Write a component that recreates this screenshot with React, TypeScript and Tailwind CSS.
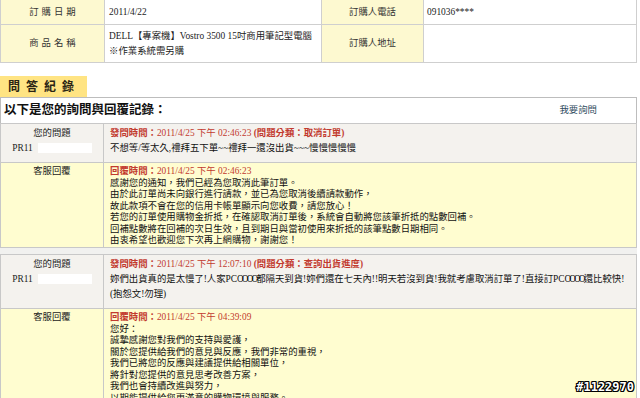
import React from "react";

const BR = "border-[#c8c8c8]";

function TopLabel({ children, wide }: { children: React.ReactNode; wide?: boolean }) {
  return (
    <div
      className={`shrink-0 bg-[#fdf9d0] border-r border-[#cfcfcf] flex items-center justify-center text-[#333] ${
        wide ? "w-[102px]" : "w-[104px] tracking-[3px] pl-[3px]"
      }`}
    >
      {children}
    </div>
  );
}

function Block({
  red,
  redMeta,
  qLines,
  rTime,
  rLines,
}: {
  red: string;
  redMeta: string;
  qLines: React.ReactNode[];
  rTime: string;
  rLines: string[];
}) {
  return (
    <div className={`w-[637px] border ${BR}`}>
      <div className={`flex bg-[#f4f2ee] border-b ${BR}`}>
        <div className={`w-[103px] shrink-0 border-r ${BR} text-center pt-[1.5px] pb-[6.5px] leading-[15px] text-[#222]`}>
          <div>您的問題</div>
          <div className="flex items-center justify-center">
            <span>PR11</span>
            <span className="inline-block w-[54px] h-[10px] bg-white ml-[5px]" />
          </div>
        </div>
        <div className="flex-1 min-w-0 pl-[6px] pt-[1.5px] pb-[6.5px] leading-[15px] whitespace-nowrap overflow-hidden text-[#111]">
          <div className="text-[#c23a2e]">
            <span className="font-semibold">發問時間：</span>
            {red}
            <span className="font-semibold">{redMeta}</span>
          </div>
          {qLines.map((l, i) => (
            <div key={i}>{l}</div>
          ))}
        </div>
      </div>
      <div className="flex bg-[#fffdd0]">
        <div className={`w-[103px] shrink-0 border-r ${BR} text-center pt-[3px] leading-[11.5px] text-[#222]`}>
          客服回覆
        </div>
        <div className="flex-1 min-w-0 pl-[6px] pt-[3px] pb-[0.5px] leading-[11.5px] whitespace-nowrap overflow-hidden text-[#111]">
          <div className="text-[#c23a2e]">
            <span className="font-semibold">回覆時間：</span>
            {rTime}
          </div>
          {rLines.map((l, i) => (
            <div key={i}>{l}</div>
          ))}
        </div>
      </div>
    </div>
  );
}

export default function App() {
  return (
    <div className="relative w-[640px] h-[398px] overflow-hidden bg-white text-[9.4px] [font-family:'Liberation_Serif','Noto_Sans_CJK_TC',serif]">
      {/* top order table */}
      <div className="w-[637px]">
        <div className="flex h-[25px] border-b border-[#cfcfcf] border-l">
          <TopLabel>訂購日期</TopLabel>
          <div className="w-[217px] shrink-0 border-r border-[#cfcfcf] flex items-center pl-[4px] text-[#222]">
            2011/4/22
          </div>
          <TopLabel wide>訂購人電話</TopLabel>
          <div className="flex-1 border-r border-[#cfcfcf] flex items-center pl-[3px] text-[#222]">091036****</div>
        </div>
        <div className="flex h-[38px] border-b border-[#cfcfcf] border-l">
          <TopLabel>商品名稱</TopLabel>
          <div className="w-[217px] shrink-0 border-r border-[#cfcfcf] flex flex-col justify-center pl-[4px] leading-[15px] text-[#222] whitespace-nowrap overflow-hidden">
            <div>DELL【專案機】Vostro 3500 15吋商用筆記型電腦</div>
            <div>※作業系統需另購</div>
          </div>
          <TopLabel wide>訂購人地址</TopLabel>
          <div className="flex-1 border-r border-[#cfcfcf]" />
        </div>
      </div>

      {/* tab */}
      <div className="mt-[13px] w-[87px] h-[21px] bg-[#ffe483] flex items-center pl-[8px] text-[12px] font-bold tracking-[6px] text-[#2a2414]">
        問答紀錄
      </div>

      {/* box header */}
      <div className={`w-[637px] h-[26px] border-t border-l border-r border-[#bdbdbd] flex items-center pl-[3px] pr-[39px]`}>
        <span className="text-[12.5px] font-bold text-[#111]">以下是您的詢問與回覆記錄：</span>
        <span className="ml-auto text-[#2f4b5e]">我要詢問</span>
      </div>

      <div className="w-[637px] bg-[#f1f1ef] flex flex-col gap-[6px]">
        <Block
          red="2011/4/25 下午 02:46:23 "
          redMeta="(問題分類：取消訂單)"
          qLines={["不想等/等太久,禮拜五下單~~禮拜一還沒出貨~~~慢慢慢慢慢"]}
          rTime="2011/4/25 下午 02:46:23"
          rLines={[
            "感謝您的通知，我們已經為您取消此筆訂單。",
            "由於此訂單尚未向銀行進行請款，並已為您取消後續請款動作，",
            "故此款項不會在您的信用卡帳單顯示向您收費，請您放心！",
            "若您的訂單使用購物金折抵，在確認取消訂單後，系統會自動將您該筆折抵的點數回補。",
            "回補點數將在回補的次日生效，且到期日與當初使用來折抵的該筆點數日期相同。",
            "由衷希望也歡迎您下次再上網購物，謝謝您！",
          ]}
        />
        <Block
          red="2011/4/25 下午 12:07:10 "
          redMeta="(問題分類：查詢出貨進度)"
          qLines={[
            <>
              妳們出貨真的是太慢了!人家PC<span className="tracking-[-2px]">OOOO</span>都隔天到貨!妳們還在七天內!!明天若沒到貨!我就考慮取消訂單了!直接訂PC
              <span className="tracking-[-2px]">OOOO</span>還比較快!
            </>,
            "(抱怨文!勿理)",
          ]}
          rTime="2011/4/25 下午 04:39:09"
          rLines={[
            "您好：",
            "誠摯感謝您對我們的支持與愛護，",
            "關於您提供給我們的意見與反應，我們非常的重視，",
            "我們已將您的反應與建議提供給相關單位，",
            "將針對您提供的意見思考改善方案，",
            "我們也會持續改進與努力，",
            "以期能提供給您更滿意的購物環境與服務。",
          ]}
        />
      </div>

      {/* watermark */}
      <div className="absolute right-[6px] bottom-[2px] text-[12px] font-bold text-white [font-family:'DejaVu_Sans_Mono',monospace] [text-shadow:1px_0_0_#000,-1px_0_0_#000,0_1px_0_#000,0_-1px_0_#000,1px_1px_0_#000,-1px_-1px_0_#000,1px_-1px_0_#000,-1px_1px_0_#000]">
        #1122970
      </div>
    </div>
  );
}
